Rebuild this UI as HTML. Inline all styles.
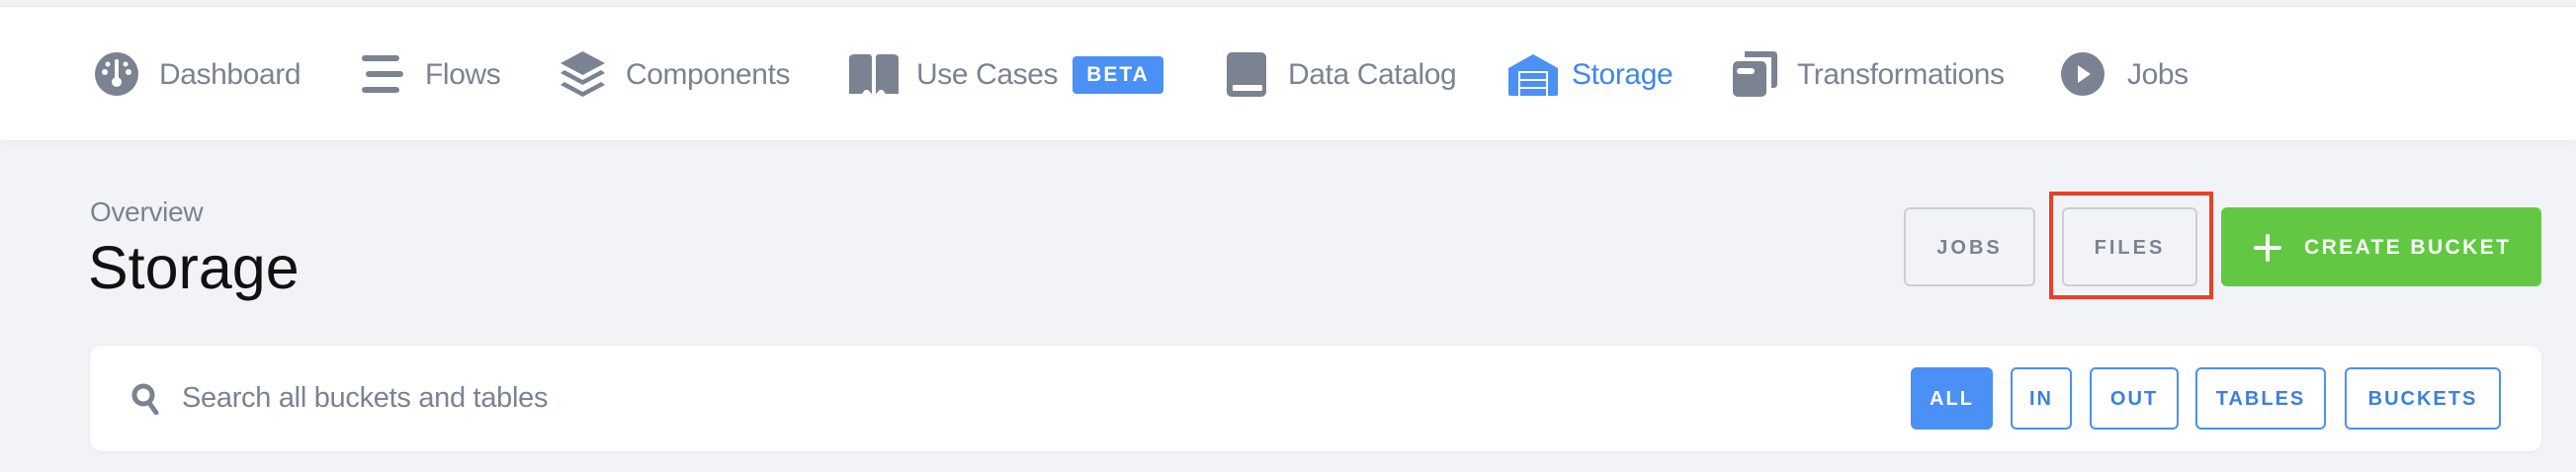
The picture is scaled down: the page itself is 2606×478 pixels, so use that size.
<!DOCTYPE html>
<html><head><meta charset="utf-8"><style>
*{margin:0;padding:0;box-sizing:border-box}
body{width:2606px;height:478px;background:#f2f3f7;font-family:"Liberation Sans",sans-serif;position:relative;overflow:hidden}
.top{position:absolute;left:0;top:0;width:2606px;height:7px;background:#f2f3f7;border-bottom:1px solid #e7e8ee}
.hdr{position:absolute;left:0;top:7px;width:2606px;height:135px;background:#fff;box-shadow:0 2px 8px rgba(0,0,0,.04)}
.n{position:absolute;top:59px;font-size:30px;color:#7b8291;line-height:34px;letter-spacing:-0.4px}
.ic{position:absolute}
.badge{position:absolute;left:1085px;top:57px;width:92px;height:38px;background:#4a90f5;border-radius:4px;color:#fff;font-weight:bold;font-size:21px;letter-spacing:2px;text-align:center;line-height:38px}
.ov{position:absolute;left:91px;top:199px;font-size:28px;color:#7b8291;letter-spacing:-0.3px}
.h1{position:absolute;left:89px;top:236px;font-size:61px;color:#111}
.btn{position:absolute;top:210px;height:80px;border:2px solid #c9ced8;border-radius:6px;font-size:20px;letter-spacing:3px;color:#7b8291;font-weight:600;text-align:center;line-height:78px}
.red{position:absolute;left:2073px;top:194px;width:166px;height:109px;border:4px solid #e8402a}
.grn{position:absolute;left:2247px;top:210px;width:324px;height:80px;background:#62c844;border-radius:6px;color:#fff;font-size:21px;letter-spacing:2.4px;font-weight:600;line-height:82px;padding-left:84px}
.card{position:absolute;left:91px;top:350px;width:2480px;height:107px;background:#fff;border-radius:12px;box-shadow:0 1px 4px rgba(0,0,0,.05)}
.st{position:absolute;left:184px;top:387px;font-size:29px;color:#7b8291;letter-spacing:-0.3px}
.f{position:absolute;top:372px;height:63px;border:2px solid #4a90f5;border-radius:6px;color:#3c7fe0;font-weight:bold;font-size:20px;letter-spacing:2px;text-align:center;line-height:61px}
</style></head><body>
<div class="top"></div>
<div class="hdr"></div>
<svg class="ic" style="left:96px;top:53px" width="44" height="44" viewBox="0 0 44 44"><circle cx="22" cy="22" r="22" fill="#7b8291"/><circle cx="22" cy="30" r="5" fill="#fff"/><rect x="20" y="7" width="4" height="22" rx="2" fill="#fff"/><circle cx="10" cy="20" r="3" fill="#fff"/><circle cx="34" cy="20" r="3" fill="#fff"/><circle cx="13" cy="12" r="2.5" fill="#fff"/><circle cx="31" cy="12" r="2.5" fill="#fff"/></svg>
<div class="n" style="left:161px">Dashboard</div>
<svg class="ic" style="left:366px;top:56px" width="42" height="38" viewBox="0 0 42 38"><rect x="0" y="0" width="38" height="6" rx="3" fill="#7b8291"/><rect x="4" y="16" width="38" height="6" rx="3" fill="#7b8291"/><rect x="0" y="32" width="38" height="6" rx="3" fill="#7b8291"/></svg>
<div class="n" style="left:430px">Flows</div>
<svg class="ic" style="left:567px;top:52px" width="45" height="46" viewBox="0 0 45 46"><path d="M22.5 0L45 12 22.5 24 0 12z" fill="#7b8291"/><path d="M4 19l18.5 10L41 19l4 3-22.5 12L0 22z" fill="#7b8291"/><path d="M4 31l18.5 10L41 31l4 3-22.5 12L0 34z" fill="#7b8291"/></svg>
<div class="n" style="left:633px">Components</div>
<svg class="ic" style="left:859px;top:55px" width="50" height="40" viewBox="0 0 50 40"><path d="M0 4Q0 0 6 0h14q3 0 3 4v36l-4-4h-3l-3 4H0z" fill="#7b8291"/><path d="M50 4Q50 0 44 0H30q-3 0-3 4v36l4-4h3l3 4h13z" fill="#7b8291"/></svg>
<div class="n" style="left:927px">Use Cases</div>
<div class="badge">BETA</div>
<svg class="ic" style="left:1241px;top:53px" width="40" height="45" viewBox="0 0 40 45"><rect x="0" y="0" width="40" height="45" rx="5" fill="#7b8291"/><rect x="6" y="33" width="30" height="6" rx="1" fill="#fff"/></svg>
<div class="n" style="left:1303px">Data Catalog</div>
<svg class="ic" style="left:1526px;top:55px" width="50" height="42" viewBox="0 0 50 42"><path d="M0 14L25 0l25 14v26q0 2-2 2H2q-2 0-2-2z" fill="#4a90f5"/><rect x="10" y="17" width="30" height="25" fill="#fff"/><rect x="12" y="19" width="26" height="6" fill="#4a90f5"/><rect x="12" y="27" width="26" height="6" fill="#4a90f5"/><rect x="12" y="35" width="26" height="7" fill="#4a90f5"/></svg>
<div class="n" style="left:1590px;color:#3f86f0">Storage</div>
<svg class="ic" style="left:1753px;top:52px" width="45" height="46" viewBox="0 0 45 46"><path d="M12 0h29q4 0 4 4v29q0 4-4 4h-2V6H12z" fill="#7b8291"/><rect x="0" y="10" width="34" height="36" rx="5" fill="#7b8291"/><rect x="4" y="17" width="18" height="6" rx="3" fill="#fff"/></svg>
<div class="n" style="left:1818px">Transformations</div>
<svg class="ic" style="left:2085px;top:53px" width="44" height="44" viewBox="0 0 44 44"><circle cx="22" cy="22" r="22" fill="#7b8291"/><path d="M17 13l13 9-13 9z" fill="#fff"/></svg>
<div class="n" style="left:2152px">Jobs</div>

<div class="ov">Overview</div>
<div class="h1">Storage</div>
<div class="btn" style="left:1926px;width:133px">JOBS</div>
<div class="btn" style="left:2086px;width:137px">FILES</div>
<div class="red"></div>
<div class="grn">CREATE BUCKET</div>
<svg class="ic" style="left:2280px;top:237px" width="28" height="28" viewBox="0 0 28 28"><rect x="12" y="0" width="4" height="28" rx="2" fill="#fff"/><rect x="0" y="12" width="28" height="4" rx="2" fill="#fff"/></svg>

<div class="card"></div>
<svg class="ic" style="left:133px;top:388px" width="28" height="32" viewBox="0 0 28 32"><circle cx="12" cy="12" r="9" fill="none" stroke="#7b8291" stroke-width="5"/><path d="M18 20l7 10" stroke="#7b8291" stroke-width="5" stroke-linecap="round"/></svg>
<div class="st">Search all buckets and tables</div>
<div class="f" style="left:1933px;width:83px;background:#4a90f5;color:#fff">ALL</div>
<div class="f" style="left:2034px;width:62px">IN</div>
<div class="f" style="left:2114px;width:90px">OUT</div>
<div class="f" style="left:2221px;width:132px">TABLES</div>
<div class="f" style="left:2372px;width:158px">BUCKETS</div>
</body></html>
